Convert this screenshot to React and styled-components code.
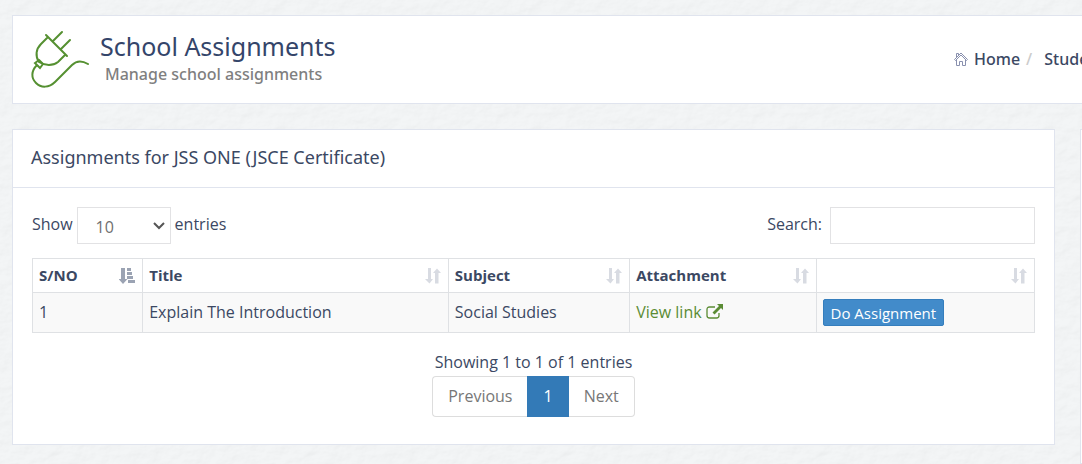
import React from "react";
import styled, { createGlobalStyle, css } from "styled-components";

const paper = encodeURIComponent(
  `<svg xmlns="http://www.w3.org/2000/svg" width="256" height="256"><filter id="p" x="0" y="0" width="100%" height="100%" color-interpolation-filters="sRGB"><feTurbulence type="fractalNoise" baseFrequency="0.06 0.09" numOctaves="4" stitchTiles="stitch" result="n"/><feDiffuseLighting in="n" lighting-color="#f6f6f6" surfaceScale="0.7" diffuseConstant="1.13"><feDistantLight azimuth="50" elevation="62"/></feDiffuseLighting></filter><rect width="256" height="256" filter="url(#p)" opacity="0.2"/></svg>`
);

const Global = createGlobalStyle`
  *, *::before, *::after { box-sizing: border-box; }
  body {
    margin: 0;
    min-height: 100vh;
    overflow: hidden;
    background: #f0f3f4 url("data:image/svg+xml,${paper}");
    color: #3b4863;
    font: 16px/24px "Open Sans", "Noto Sans", sans-serif;
  }
  button, input, select { font: inherit; color: inherit; }
`;

const line = "#e0e4ee";

const Page = styled.div`
  min-height: 100vh;
  padding: 15px 0 0 12px;
  display: flex;
  flex-direction: column;
  gap: 25px;
`;

const PageHeader = styled.header`
  display: flex;
  align-items: center;
  padding: 13px 0 14px 18px;
  background: #fff;
  border: 1px solid ${line};
  border-right: 0;
`;

const PlugIcon = styled.svg`
  width: 60px;
  height: 60px;
  flex: none;
  fill: none;
  stroke: #559031;
  stroke-width: 2;
  stroke-linecap: round;
`;

const Titles = styled.div`
  flex: 1;
  padding: 0 0 2px 9px;
`;

const PageTitle = styled.h1`
  margin: 0;
  font: 450 25px/32px "Noto Sans", "Open Sans", sans-serif;
  color: #34456a;
`;

const Subtitle = styled.p`
  margin: 0 0 0 5px;
  font: 500 16px/24px "Noto Sans", "Open Sans", sans-serif;
  color: #7f7f7f;
`;

const Breadcrumb = styled.nav`
  width: 128px;
  display: flex;
  align-items: center;
  overflow: hidden;
  white-space: nowrap;
  font-family: "Noto Sans", "Open Sans", sans-serif;
  font-weight: 500;
`;

const Crumb = styled.a`
  display: flex;
  align-items: center;
  gap: 6px;
  color: #3b4863;
  text-decoration: none;
`;

const Slash = styled.span`
  padding: 0 12px 0 6px;
  color: #ccc;
`;

const Columns = styled.div`
  flex: 1;
  display: grid;
  grid-template-columns: minmax(0, 1fr) 2px;
  gap: 25px;
`;

const Panel = styled.section`
  align-self: start;
  background: #fff;
  border: 1px solid ${line};
`;

const SidePanel = styled.aside`
  background: #fff;
  border: 1px solid ${line};
  border-right: 0;
`;

const PanelTitle = styled.h2`
  margin: 0;
  padding: 15px 18px 18px;
  border-bottom: 1px solid ${line};
  font: 450 18px/24px "Noto Sans", "Open Sans", sans-serif;
  color: #3b4863;
`;

const PanelBody = styled.div`
  padding: 19px 19px 27px;
`;

const Toolbar = styled.div`
  display: flex;
  justify-content: space-between;
  margin-bottom: 14px;
`;

const Field = styled.label`
  display: flex;
  gap: ${(p) => p.$gap}px;
  line-height: 34px;
`;

const control = css`
  height: 37px;
  background: #fff;
  border: 1px solid #e2e2e4;
  border-radius: 0;
  outline: 0;
`;

const SelectBox = styled.span`
  position: relative;
  display: block;
`;

const Select = styled.select`
  ${control}
  display: block;
  appearance: none;
  width: 94px;
  padding: 2px 18px 0;
  color: #6f6f6f;
`;

const Chevron = styled.svg`
  position: absolute;
  right: 5px;
  top: 13px;
  width: 14px;
  height: 12px;
  fill: none;
  stroke: #555;
  stroke-width: 2;
  pointer-events: none;
`;

const SearchInput = styled.input`
  ${control}
  width: 205px;
  padding: 0 12px;
`;

const Table = styled.table`
  width: 100%;
  table-layout: fixed;
  border-collapse: collapse;
`;

const cell = css`
  padding: 0 6px 2px;
  border: 1px solid #dfe1e4;
  text-align: left;
`;

const HeadCell = styled.th`
  ${cell}
  width: ${(p) => p.$width};
  height: 34px;
  font-size: 15px;
  font-weight: 700;
`;

const HeadInner = styled.div`
  display: flex;
  justify-content: space-between;
  align-items: center;
`;

const SortIcon = styled.svg`
  width: 16px;
  height: 16px;
  flex: none;
  margin: 2px 1px 0 auto;
  fill: ${(p) => (p.$active ? "#9ba3b3" : "#d8dbe2")};
`;

const Cell = styled.td`
  ${cell}
  height: 40px;
  background: #f9f9f9;
`;

const ViewLink = styled.a`
  display: inline-flex;
  align-items: center;
  gap: 4px;
  color: #5b8c34;
  text-decoration: none;
`;

const ActionButton = styled.button`
  display: block;
  height: 27px;
  margin-top: 2px;
  padding: 1px 7px 0;
  background: #428bca;
  border: 1px solid #357ebd;
  border-radius: 2px;
  color: #fff;
  font-size: 15px;
  line-height: 24px;
  font-weight: 500;
`;

const Footer = styled.div`
  display: flex;
  flex-direction: column;
  align-items: center;
  padding-top: 17px;
`;

const Info = styled.p`
  margin: 0 0 2px;
`;

const Pagination = styled.div`
  display: flex;
`;

const PageButton = styled.button`
  height: 41px;
  padding: 0 15px 2px;
  border: 1px solid #ddd;
  background: #fff;
  color: #777;
  &:first-child { border-right: 0; border-radius: 4px 0 0 4px; }
  &:last-child { border-left: 0; border-radius: 0 4px 4px 0; }
  ${(p) =>
    p.$current &&
    css`
      background: #337ab7;
      border-color: #337ab7;
      color: #fff;
    `}
`;

function Sort({ active }) {
  return (
    <SortIcon $active={active} viewBox="0 0 16 16" aria-hidden="true">
      {active ? (
        <path d="M2 0h4v11h2.500L4 16-.5 11H2zM8 0h4v3H8zM8 4h5v3H8zM8 8h6v3H8zM9 12h7v3H9z" />
      ) : (
        <path d="M3 0h3v11h2L4.500 15.500 0 11h3zM10 15.500h3.500V5H16L12 .5 8 5h2z" />
      )}
    </SortIcon>
  );
}

const headings = [
  { label: "S/NO", width: "11%" },
  { label: "Title", width: "30.5%" },
  { label: "Subject", width: "18.1%" },
  { label: "Attachment", width: "18.6%" },
  { label: "", width: "21.8%" },
];

export default function App() {
  return (
    <>
      <Global />
      <Page>
        <PageHeader>
          <PlugIcon viewBox="0 0 60 60" aria-hidden="true">
            <path d="M15 6 36 27M22 12 31 3M30 20 39 11M17 8 10 15C5 20 4 27 8 33C14 37 22 37 27 33L34 26" />
            <path d="M8 31 4 34 9 39 12 35M8 31 12 35M6 36C0 42 0 49 5 54C10 59 18 59 24 53L41 36C46 31 52 32 57 35" />
          </PlugIcon>
          <Titles>
            <PageTitle>School Assignments</PageTitle>
            <Subtitle>Manage school assignments</Subtitle>
          </Titles>
          <Breadcrumb aria-label="Breadcrumb">
            <Crumb href="#home">
              <svg width="14" height="14" viewBox="0 0 14 14" fill="none" stroke="#8990ae" aria-hidden="true">
                <path d="M.5 7.500 7 1l6.500 6.500-1 1L7 3 1.500 8.500zM2.500 8v5.500h3v-4h3v4h3V8M2.500 5V1.500h2V3" />
              </svg>
              Home
            </Crumb>
            <Slash>/</Slash>
            <Crumb href="#student">Student</Crumb>
          </Breadcrumb>
        </PageHeader>

        <Columns>
          <Panel>
            <PanelTitle>Assignments for JSS ONE (JSCE Certificate)</PanelTitle>
            <PanelBody>
              <Toolbar>
                <Field $gap={4}>
                  Show
                  <SelectBox>
                    <Select defaultValue="10">
                      <option>10</option>
                      <option>25</option>
                      <option>50</option>
                    </Select>
                    <Chevron viewBox="0 0 14 12">
                      <path d="m2 3 5 5 5-5" />
                    </Chevron>
                  </SelectBox>
                  entries
                </Field>
                <Field $gap={8}>
                  Search:
                  <SearchInput type="search" />
                </Field>
              </Toolbar>
              <Table>
                <thead>
                  <tr>
                    {headings.map((h, i) => (
                      <HeadCell key={i} $width={h.width}>
                        <HeadInner>
                          {h.label}
                          <Sort active={i === 0} />
                        </HeadInner>
                      </HeadCell>
                    ))}
                  </tr>
                </thead>
                <tbody>
                  <tr>
                    <Cell>1</Cell>
                    <Cell>Explain The Introduction</Cell>
                    <Cell>Social Studies</Cell>
                    <Cell>
                      <ViewLink href="#attachment">
                        View link
                        <svg width="17" height="16" viewBox="0 0 17 16" aria-hidden="true">
                          <path d="M9 3H3.500Q1 3 1 5.500v6Q1 14 3.500 14h7q2.500 0 2.500-2.500V9" fill="none" stroke="currentColor" strokeWidth="1.300" />
                          <path d="M11 0h6v6l-2-2-6.500 6.500-2-2L13 2z" fill="currentColor" />
                        </svg>
                      </ViewLink>
                    </Cell>
                    <Cell>
                      <ActionButton type="button">Do Assignment</ActionButton>
                    </Cell>
                  </tr>
                </tbody>
              </Table>
              <Footer>
                <Info>Showing 1 to 1 of 1 entries</Info>
                <Pagination>
                  <PageButton type="button">Previous</PageButton>
                  <PageButton type="button" $current aria-current="page">1</PageButton>
                  <PageButton type="button">Next</PageButton>
                </Pagination>
              </Footer>
            </PanelBody>
          </Panel>
          <SidePanel />
        </Columns>
      </Page>
    </>
  );
}
